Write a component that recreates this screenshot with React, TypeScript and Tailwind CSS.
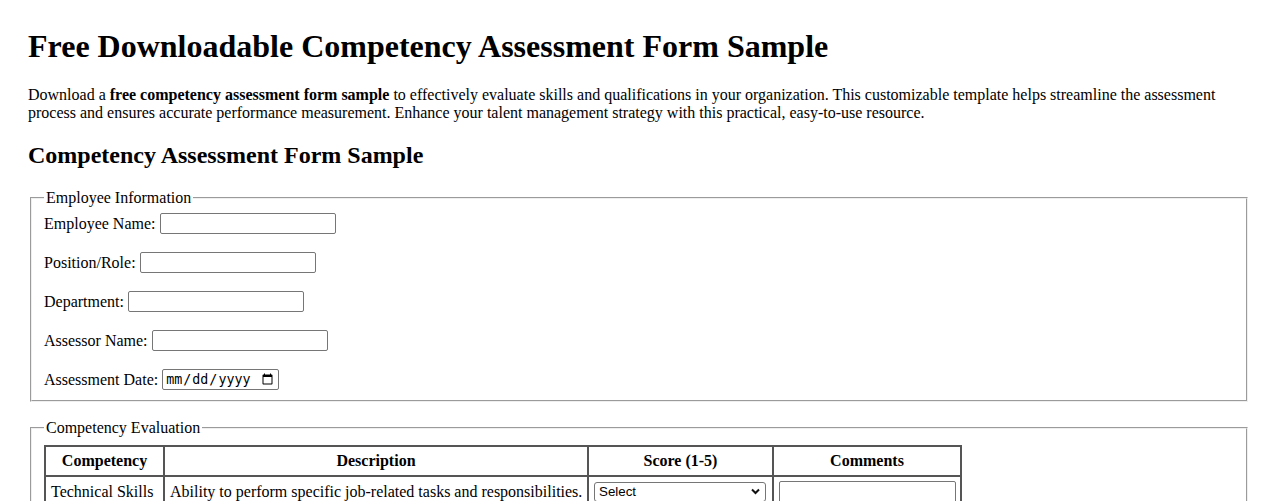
import React from "react";

const rows = [
  ["Technical Skills", "Ability to perform specific job-related tasks and responsibilities."],
  ["Communication", "Clearly conveys information and ideas, both verbally and in writing."],
  ["Teamwork", "Works collaboratively with others to achieve shared goals."],
  ["Problem Solving", "Identifies issues and develops effective solutions."],
  ["Leadership", "Guides, motivates and supports others toward objectives."],
];

const fields = ["Employee Name:", "Position/Role:", "Department:", "Assessor Name:"];

function ScoreSelect() {
  return (
    <div className="relative -mt-[1px] inline-block h-[20px] w-[172px]">
      <select
        defaultValue=""
        className="h-[20px] w-[172px] appearance-none rounded-[3px] border border-[#767676] bg-white pl-[4px] pr-[20px] font-['Liberation_Sans',Arial,sans-serif] text-[13.333px] leading-[normal] text-black"
      >
        <option value="">Select</option>
        <option value="1">1</option>
        <option value="2">2</option>
        <option value="3">3</option>
        <option value="4">4</option>
        <option value="5">5</option>
      </select>
      <svg
        className="pointer-events-none absolute right-[6px] top-[6px]"
        width="9"
        height="7"
        viewBox="0 0 9 7"
        fill="none"
      >
        <path d="M1 1.5 L4.5 5 L8 1.5" stroke="#111" strokeWidth="2" strokeLinecap="butt" strokeLinejoin="miter" />
      </svg>
    </div>
  );
}

export default function App() {
  return (
    <div className="min-h-screen bg-white px-[28px] pt-[28px] pb-[28px] font-['Liberation_Serif','Times_New_Roman',serif] text-[16px] leading-[normal] text-black">
      <h1 className="text-[32px] font-bold leading-[normal]">
        Free Downloadable Competency Assessment Form Sample
      </h1>
      <p className="mt-[21.44px]">
        Download a <strong className="font-bold">free competency assessment form sample</strong> to effectively
        evaluate skills and qualifications in your organization. This customizable template helps streamline the
        assessment process and ensures accurate performance measurement. Enhance your talent management strategy
        with this practical, easy-to-use resource.
      </p>
      <h2 className="mt-[19.92px] text-[24px] font-bold leading-[normal]">Competency Assessment Form Sample</h2>
      <form className="mt-[19.92px]">
        <fieldset className="mx-[2px] [border:2px_groove_threedface] px-[12px] pt-[6px] pb-[10px]">
          <legend className="px-[2px]">Employee Information</legend>
          <div className="flex flex-col gap-[18px]">
            {fields.map((label) => (
              <div key={label} className="flex h-[21px] items-center gap-[4px]">
                <label>{label}</label>
                <input
                  type="text"
                  className="h-[21px] w-[176px] rounded-[2px] border border-[#767676] bg-white px-[2px] py-[1px] font-['Liberation_Sans',Arial,sans-serif] text-[13.333px]"
                />
              </div>
            ))}
            <div className="flex h-[21px] items-center gap-[4px]">
              <label>Assessment Date:</label>
              <input
                type="date"
                className="h-[21px] w-[117px] rounded-[2px] border border-[#767676] bg-white px-[2px] py-[1px] [font-family:monospace] text-[13.333px]"
              />
            </div>
          </div>
        </fieldset>

        <fieldset className="mx-[2px] mt-[17px] [border:2px_groove_threedface] px-[12px] pt-[8px] pb-[10px]">
          <legend className="px-[2px]">Competency Evaluation</legend>
          <table className="w-[918px] table-fixed border-collapse">
            <colgroup>
              <col className="w-[119px]" />
              <col className="w-[424px]" />
              <col className="w-[185px]" />
              <col className="w-[188px]" />
            </colgroup>
            <thead>
              <tr>
                <th className="border-2 border-[#555555] p-[5px] text-center font-bold">Competency</th>
                <th className="border-2 border-[#555555] p-[5px] text-center font-bold">Description</th>
                <th className="border-2 border-[#555555] p-[5px] text-center font-bold">Score (1-5)</th>
                <th className="border-2 border-[#555555] p-[5px] text-center font-bold">Comments</th>
              </tr>
            </thead>
            <tbody>
              {rows.map(([name, desc]) => (
                <tr key={name}>
                  <td className="whitespace-nowrap border-2 border-[#555555] px-[5px] pt-[6px] pb-[5px] align-top">{name}</td>
                  <td className="whitespace-nowrap border-2 border-[#555555] px-[5px] pt-[6px] pb-[5px] align-top">{desc}</td>
                  <td className="border-2 border-[#555555] p-[5px] align-top">
                    <ScoreSelect />
                  </td>
                  <td className="border-2 border-[#555555] p-[5px] align-top">
                    <textarea className="-mt-[1px] block h-[36px] w-[177px] rounded-[2px] border border-[#767676] bg-white" />
                  </td>
                </tr>
              ))}
            </tbody>
          </table>
        </fieldset>
      </form>
    </div>
  );
}
